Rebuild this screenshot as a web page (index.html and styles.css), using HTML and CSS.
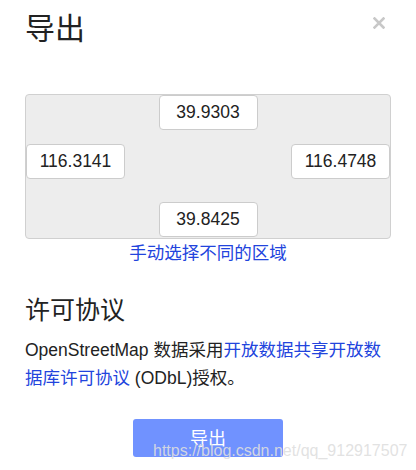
FILE: index.html
```html
<!DOCTYPE html>
<html lang="zh-CN">
<head>
    <meta charset="UTF-8">
    <meta name="viewport" content="width=device-width, initial-scale=1.0">
    <title>导出</title>
    <link rel="stylesheet" href="styles.css">
</head>
<body>
    <div class="panel">
        <header class="panel-header">
            <h1>导出</h1>
            <button class="close" aria-label="关闭">
                <svg width="12" height="12" viewBox="0 0 12 12">
                    <path d="M1.5 1.5 L10.5 10.5 M10.5 1.5 L1.5 10.5" stroke="#c8c8c8" stroke-width="2.6" stroke-linecap="square"/>
                </svg>
            </button>
        </header>

        <section class="bbox">
            <div class="bbox-row center">
                <input class="coord" type="text" value="39.9303">
            </div>
            <div class="bbox-row middle">
                <input class="coord" type="text" value="116.3141">
                <input class="coord" type="text" value="116.4748">
            </div>
            <div class="bbox-row center bottom">
                <input class="coord" type="text" value="39.8425">
            </div>
        </section>
        <p class="manual"><a href="#">手动选择不同的区域</a></p>

        <h2>许可协议</h2>
        <p class="license">OpenStreetMap 数据采用<a href="#">开放数据共享开放数据库许可协议</a> (ODbL)授权。</p>

        <div class="actions">
            <button class="export">导出</button>
        </div>
    </div>
    <div class="watermark">https://blog.csdn.net/qq_912917507</div>
</body>
</html>
```

FILE: styles.css
```css
body {
    margin: 0;
    font-family: "Liberation Sans", "Noto Sans CJK SC", sans-serif;
    font-size: 17.5px;
    color: #222;
    background: #fff;
}
a {
    color: #2244dd;
    text-decoration: none;
}
.panel {
    padding: 9px 25px 0;
}
.panel-header {
    display: flex;
    justify-content: space-between;
    align-items: flex-start;
}
.panel-header h1 {
    margin: 0;
    font-size: 30px;
    font-weight: normal;
    line-height: 40px;
}
.close {
    background: none;
    border: none;
    padding: 0;
    margin: 8px 6px 0 0;
    width: 12px;
    height: 12px;
    cursor: pointer;
}
.close svg {
    display: block;
}
.bbox {
    margin-top: 45px;
    height: 143px;
    background: #ededed;
    border: 1px solid #d0d0d0;
    border-radius: 4px;
    display: flex;
    flex-direction: column;
}
.bbox-row {
    display: flex;
}
.bbox-row.center {
    justify-content: center;
}
.bbox-row.middle {
    justify-content: space-between;
    margin-top: 14px;
}
.bbox-row.bottom {
    margin-top: 23px;
}
.coord {
    box-sizing: border-box;
    width: 99px;
    height: 35px;
    border: 1px solid #ccc;
    border-radius: 4px;
    background: #fff;
    font-family: inherit;
    font-size: 17.5px;
    color: #222;
    text-align: center;
    padding: 0;
}
.manual {
    margin: 0;
    text-align: center;
    line-height: 28px;
}
h2 {
    margin: 26px 0 0;
    font-size: 25px;
    font-weight: normal;
    line-height: 34px;
}
.license {
    margin: 9px 0 0;
    line-height: 28px;
}
.actions {
    display: flex;
    justify-content: center;
    margin-top: 27px;
}
.export {
    width: 150px;
    height: 38px;
    border: none;
    border-radius: 3px;
    background: #7092ff;
    color: #fff;
    font-family: inherit;
    font-size: 18px;
    padding: 0 0 2px;
    cursor: pointer;
}
.watermark {
    position: absolute;
    left: 153px;
    top: 442px;
    font-family: "Liberation Sans", sans-serif;
    font-size: 16px;
    color: rgba(222, 222, 222, 0.9);
    pointer-events: none;
}
```
